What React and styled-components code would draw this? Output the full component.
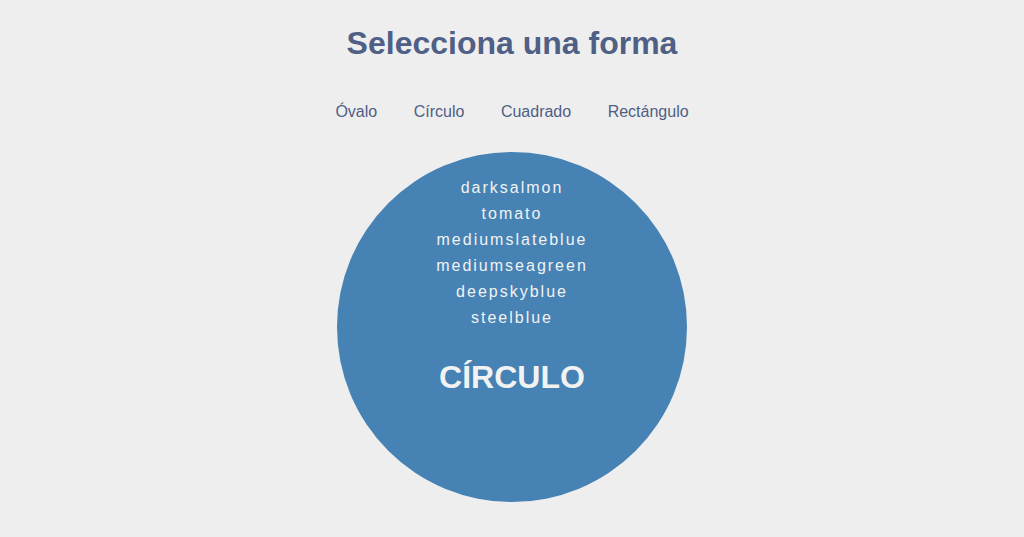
import React from "react";
import styled, { createGlobalStyle } from "styled-components";

const Global = createGlobalStyle`
  html, body { margin: 0; padding: 0; background: #eeeeee; }
  body { font-family: "Liberation Sans", Arial, sans-serif; }
`;

const Page = styled.div`
  display: flex;
  flex-direction: column;
  align-items: center;
  padding-top: 24px;
`;

const Title = styled.h1`
  margin: 0;
  font-size: 32px;
  line-height: 38px;
  font-weight: bold;
  color: #4f5f85;
`;

const Nav = styled.nav`
  display: flex;
  gap: 36.5px;
  margin-top: 40px;
`;

const NavItem = styled.a`
  font-size: 16px;
  line-height: 20px;
  color: #4f5f85;
  text-decoration: none;
  cursor: pointer;
`;

const Shape = styled.div`
  margin-top: 30px;
  width: 350px;
  height: 350px;
  border-radius: 50%;
  background: ${(p) => p.$color};
  display: flex;
  flex-direction: column;
  align-items: center;
  padding-top: 23px;
  box-sizing: border-box;
  color: #f2f2f2;
`;

const ColorList = styled.ul`
  list-style: none;
  margin: 0;
  padding: 0;
  text-align: center;
`;

const ColorItem = styled.li`
  font-size: 16px;
  line-height: 26px;
  letter-spacing: 2px;
`;

const ShapeName = styled.div`
  margin-top: 27px;
  font-size: 32px;
  line-height: 38px;
  font-weight: bold;
`;

const shapes = ["Óvalo", "Círculo", "Cuadrado", "Rectángulo"];
const colors = ["darksalmon", "tomato", "mediumslateblue", "mediumseagreen", "deepskyblue", "steelblue"];

export default function App() {
  return (
    <>
      <Global />
      <Page>
        <Title>Selecciona una forma</Title>
        <Nav>
          {shapes.map((s) => (
            <NavItem key={s}>{s}</NavItem>
          ))}
        </Nav>
        <Shape $color="steelblue">
          <ColorList>
            {colors.map((c) => (
              <ColorItem key={c}>{c}</ColorItem>
            ))}
          </ColorList>
          <ShapeName>CÍRCULO</ShapeName>
        </Shape>
      </Page>
    </>
  );
}
